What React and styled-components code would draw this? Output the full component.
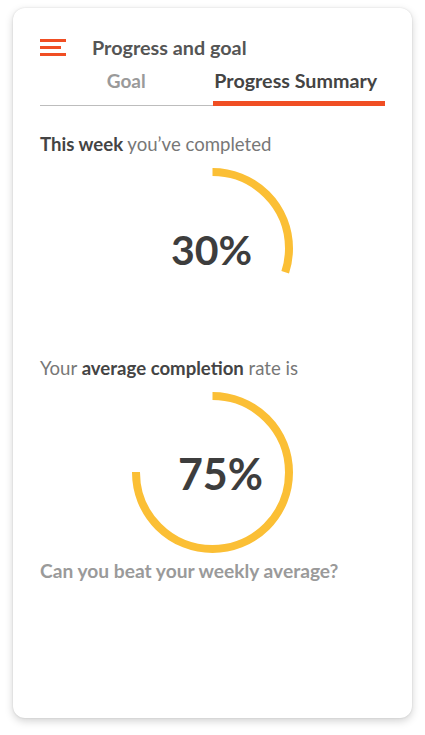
import React from "react";
import styled, { createGlobalStyle } from "styled-components";

const Global = createGlobalStyle`
  html, body { margin: 0; padding: 0; background: #ffffff; }
  body { font-family: Lato, "Open Sans", sans-serif; -webkit-font-smoothing: antialiased; }
  * { box-sizing: border-box; }
`;

const Page = styled.div`
  padding: 8px 13px 17px 13px;
`;

const Card = styled.div`
  width: 399px;
  height: 710px;
  background: #fff;
  border-radius: 12px;
  box-shadow: 0 3px 8px rgba(0, 0, 0, 0.18), 0 0 2px rgba(0, 0, 0, 0.12);
  padding: 31px 27px 0 27px;
  display: flex;
  flex-direction: column;
`;

const Header = styled.div`
  display: flex;
  align-items: center;
  gap: 26px;
  height: 16px;
`;

const Burger = styled.div`
  width: 26px;
  display: flex;
  flex-direction: column;
  gap: 4px;
`;

const BurgerLine = styled.span`
  display: block;
  height: 3px;
  width: ${(p) => p.$w}px;
  background: #f04e23;
`;

const Title = styled.h1`
  margin: 0;
  font-size: 19.8px;
  font-weight: 700;
  color: #555;
  line-height: 16px;
`;

const Tabs = styled.div`
  display: grid;
  grid-template-columns: 1fr 1fr;
  margin-top: 14px;
`;

const Tab = styled.div`
  text-align: center;
  font-size: ${(p) => (p.$active ? "19.7px" : "19px")};
  font-weight: 700;
  line-height: 24px;
  color: ${(p) => (p.$active ? "#444" : "#9a9a9a")};
  padding-bottom: ${(p) => (p.$active ? "8px" : "12px")};
  padding-right: ${(p) => (p.$active ? "6px" : "0")};
  border-bottom: ${(p) => (p.$active ? "5px solid #f04e23" : "1px solid #bdbdbd")};
  align-self: end;
`;

const Lead = styled.p`
  margin: ${(p) => p.$mt}px 0 0 0;
  font-size: 18.6px;
  line-height: 24px;
  color: #777;
  font-weight: 400;
  b { color: #444; font-weight: 700; }
`;

const RingWrap = styled.div`
  display: grid;
  place-items: center;
  width: 161px;
  height: 161px;
  margin: ${(p) => p.$mt}px auto 0 auto;
  > * { grid-area: 1 / 1; }
`;

const Pct = styled.div`
  font-size: ${(p) => p.$size}px;
  font-weight: 700;
  color: #3d3d3d;
  line-height: 1;
  transform: translate(${(p) => p.$dx}px, ${(p) => p.$dy}px);
`;

const Question = styled.p`
  margin: 6px 0 0 0;
  font-size: 19.2px;
  line-height: 24px;
  font-weight: 700;
  color: #9a9a9a;
`;

function Ring({ value, mt, size, dx = 0, dy = 0 }) {
  const r = 76.5;
  const c = 2 * Math.PI * r;
  return (
    <RingWrap $mt={mt}>
      <svg width="161" height="161" viewBox="0 0 161 161">
        <circle
          cx="80.5"
          cy="80.5"
          r={r}
          fill="none"
          stroke="#fbbf35"
          strokeWidth="8"
          strokeDasharray={`${(c * value) / 100} ${c}`}
          transform="rotate(-90 80.5 80.5)"
        />
      </svg>
      <Pct $size={size} $dx={dx} $dy={dy}>{value}%</Pct>
    </RingWrap>
  );
}

export default function App() {
  return (
    <>
      <Global />
      <Page>
        <Card>
          <Header>
            <Burger>
              <BurgerLine $w={26} />
              <BurgerLine $w={21} />
              <BurgerLine $w={26} />
            </Burger>
            <Title>Progress and goal</Title>
          </Header>
          <Tabs>
            <Tab>Goal</Tab>
            <Tab $active>Progress Summary</Tab>
          </Tabs>
          <Lead $mt={26}>
            <b>This week</b> you’ve completed
          </Lead>
          <Ring value={30} mt={12} size={41} dx={-1} dy={1} />
          <Lead $mt={27}>
            Your <b>average completion</b> rate is
          </Lead>
          <Ring value={75} mt={12} size={43} dx={8} dy={1} />
          <Question>Can you beat your weekly average?</Question>
        </Card>
      </Page>
    </>
  );
}
